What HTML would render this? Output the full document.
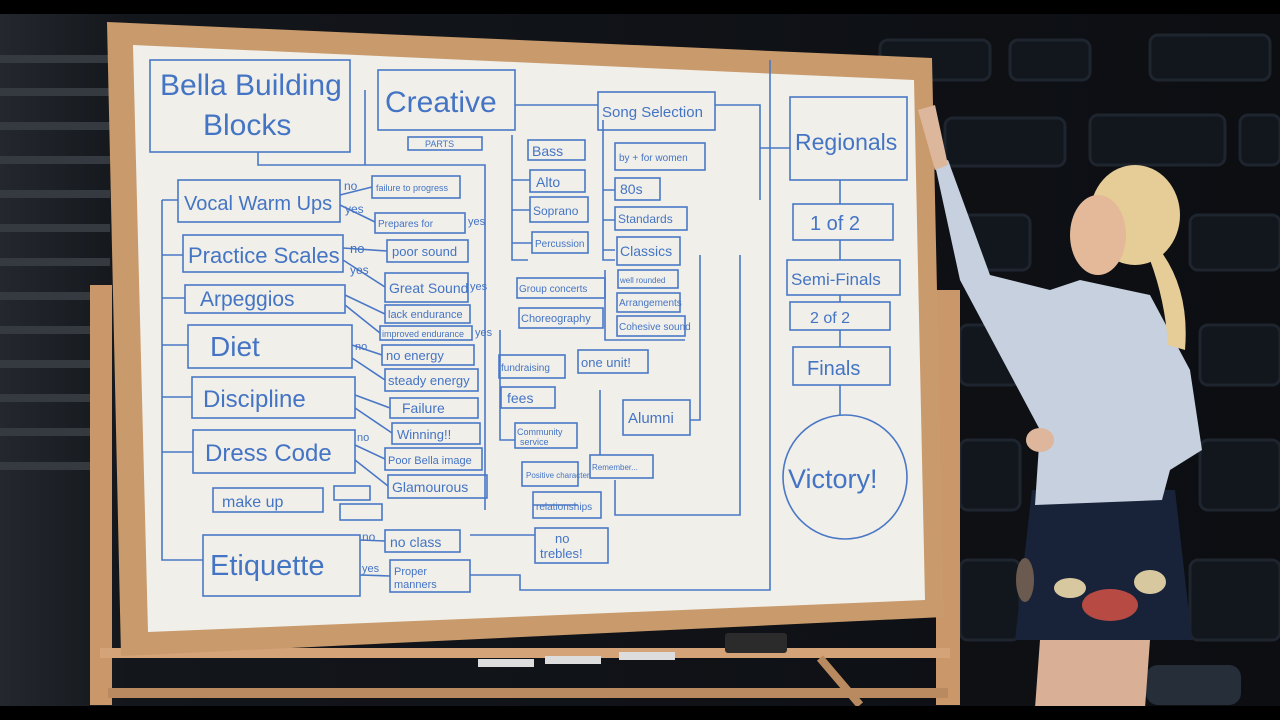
<!DOCTYPE html>
<html><head><meta charset="utf-8"><style>
html,body{margin:0;padding:0;background:#000;}
svg{display:block}
text{font-family:"Liberation Sans",sans-serif;fill:#4474c4}
</style></head><body>
<svg width="1280" height="720" viewBox="0 0 1280 720" xmlns="http://www.w3.org/2000/svg">
<defs>
<linearGradient id="bg" x1="0" x2="1" y1="0" y2="0"><stop offset="0" stop-color="#24282e"/><stop offset="0.1" stop-color="#13161b"/><stop offset="1" stop-color="#0c0e12"/></linearGradient>
</defs>
<rect width="1280" height="720" fill="url(#bg)"/>
<g fill="#353a41">
<rect x="0" y="55" width="110" height="8"/><rect x="0" y="88" width="110" height="8"/><rect x="0" y="122" width="110" height="8"/><rect x="0" y="156" width="110" height="8"/><rect x="0" y="190" width="110" height="8"/><rect x="0" y="224" width="110" height="8"/><rect x="0" y="258" width="110" height="8"/><rect x="0" y="292" width="100" height="8"/><rect x="0" y="326" width="100" height="8"/><rect x="0" y="360" width="100" height="8"/><rect x="0" y="394" width="100" height="8"/><rect x="0" y="428" width="100" height="8"/><rect x="0" y="462" width="100" height="8"/>
</g>
<g fill="#12161d" stroke="#1e252f" stroke-width="3">
<rect x="1010" y="40" width="80" height="40" rx="8"/><rect x="1150" y="35" width="120" height="45" rx="8"/><rect x="880" y="40" width="110" height="40" rx="8"/>
<rect x="945" y="118" width="120" height="48" rx="8"/><rect x="1090" y="115" width="135" height="50" rx="8"/><rect x="1240" y="115" width="40" height="50" rx="8"/>
<rect x="960" y="215" width="70" height="55" rx="8"/><rect x="1190" y="215" width="90" height="55" rx="8"/>
<rect x="960" y="325" width="60" height="60" rx="8"/><rect x="1200" y="325" width="80" height="60" rx="8"/>
<rect x="960" y="440" width="60" height="70" rx="8"/><rect x="1200" y="440" width="80" height="70" rx="8"/>
<rect x="960" y="560" width="60" height="80" rx="8"/><rect x="1190" y="560" width="90" height="80" rx="8"/>
</g>
<rect x="90" y="285" width="22" height="420" fill="#c9976a"/>
<rect x="936" y="290" width="24" height="415" fill="#c9976a"/>
<rect x="100" y="648" width="850" height="10" fill="#d4a478"/>
<rect x="108" y="688" width="840" height="10" fill="#b98a5f"/>
<line x1="820" y1="658" x2="860" y2="705" stroke="#b98a5f" stroke-width="8"/>
<polygon points="107,22 932,58 944,617 121,656" fill="#c99a6b"/>
<polygon points="133,45 914,80 925,600 148,632" fill="#f1efea"/>
<rect x="478" y="659" width="56" height="8" fill="#ddd"/><rect x="545" y="656" width="56" height="8" fill="#ddd"/><rect x="619" y="652" width="56" height="8" fill="#ddd"/>
<rect x="725" y="633" width="62" height="20" rx="3" fill="#2b2b2b"/>
<g fill="none" stroke="#4a78c6" stroke-width="1.6">
<rect x="150" y="60" width="200" height="92"/>
<rect x="378" y="70" width="137" height="60"/>
<rect x="408" y="137" width="74" height="13"/>
<rect x="598" y="92" width="117" height="38"/>
<rect x="790" y="97" width="117" height="83"/>
<rect x="178" y="180" width="162" height="42"/>
<rect x="183" y="235" width="160" height="37"/>
<rect x="185" y="285" width="160" height="28"/>
<rect x="188" y="325" width="164" height="43"/>
<rect x="192" y="377" width="163" height="41"/>
<rect x="193" y="430" width="162" height="43"/>
<rect x="213" y="488" width="110" height="24"/>
<rect x="203" y="535" width="157" height="61"/>
<rect x="372" y="176" width="88" height="22"/><rect x="375" y="213" width="90" height="20"/><rect x="387" y="240" width="81" height="22"/><rect x="385" y="273" width="83" height="29"/><rect x="385" y="305" width="85" height="18"/><rect x="380" y="326" width="92" height="14"/><rect x="382" y="345" width="92" height="20"/><rect x="385" y="369" width="93" height="22"/><rect x="390" y="398" width="88" height="20"/><rect x="392" y="423" width="88" height="21"/><rect x="385" y="448" width="97" height="22"/><rect x="388" y="475" width="99" height="23"/><rect x="385" y="530" width="75" height="22"/><rect x="390" y="560" width="80" height="32"/>
<rect x="334" y="486" width="36" height="14"/><rect x="340" y="504" width="42" height="16"/>
<rect x="528" y="140" width="57" height="20"/><rect x="530" y="170" width="55" height="22"/><rect x="530" y="197" width="58" height="25"/><rect x="532" y="232" width="56" height="21"/><rect x="517" y="278" width="88" height="20"/><rect x="519" y="308" width="84" height="20"/><rect x="499" y="355" width="66" height="23"/><rect x="501" y="387" width="54" height="21"/><rect x="578" y="350" width="70" height="23"/><rect x="623" y="400" width="67" height="35"/><rect x="515" y="423" width="62" height="25"/><rect x="522" y="462" width="56" height="24"/><rect x="533" y="492" width="68" height="26"/><rect x="535" y="528" width="73" height="35"/><rect x="590" y="455" width="63" height="23"/>
<rect x="615" y="143" width="90" height="27"/><rect x="615" y="178" width="45" height="22"/><rect x="615" y="207" width="72" height="23"/><rect x="617" y="237" width="63" height="28"/><rect x="618" y="270" width="60" height="18"/><rect x="617" y="293" width="63" height="19"/><rect x="617" y="316" width="68" height="20"/>
<rect x="793" y="204" width="100" height="36"/><rect x="787" y="260" width="113" height="35"/><rect x="790" y="302" width="100" height="28"/><rect x="793" y="347" width="97" height="38"/>
<circle cx="845" cy="477" r="62"/>
<path d="M258 152V165H485V510M162 200V560H203M162 255H183M162 298H185M162 345H188M162 397H192M162 452H193M162 200H178M515 105H598M365 90V165M715 105H760V200M760 148H790M840 180V204M840 240V260M840 295V302M840 330V347M840 385V415M512 135V260H528M512 180H530M512 210H530M512 243H532M603 120V260H615M603 190H615M603 220H615M603 250H615M605 270V340H685M700 255V420H690M740 255V515H615V480M500 330V440H515M470 535H535M470 575H520V590H770V60M578 505H533M600 390V455"/>
<path d="M340 195L372 187M340 205L375 222M343 248L387 251M343 260L385 287M345 295L385 314M345 305L380 333M352 345L382 355M352 358L385 380M355 395L390 408M355 408L392 433M355 445L385 459M355 460L388 486M360 540L385 541M360 575L390 576"/>
</g>
<g>
<text x="160" y="95" font-size="30">Bella Building</text>
<text x="203" y="135" font-size="30">Blocks</text>
<text x="385" y="112" font-size="30">Creative</text>
<text x="425" y="147" font-size="9">PARTS</text>
<text x="602" y="117" font-size="15">Song Selection</text>
<text x="795" y="150" font-size="23">Regionals</text>
<text x="184" y="210" font-size="20">Vocal Warm Ups</text>
<text x="188" y="263" font-size="22">Practice Scales</text>
<text x="200" y="306" font-size="21">Arpeggios</text>
<text x="210" y="356" font-size="28">Diet</text>
<text x="203" y="407" font-size="24">Discipline</text>
<text x="205" y="461" font-size="24">Dress Code</text>
<text x="222" y="507" font-size="16">make up</text>
<text x="210" y="575" font-size="29">Etiquette</text>
<text x="376" y="191" font-size="9">failure to progress</text>
<text x="378" y="227" font-size="10">Prepares for</text>
<text x="392" y="256" font-size="13">poor sound</text>
<text x="389" y="293" font-size="14">Great Sound</text>
<text x="388" y="318" font-size="11">lack endurance</text>
<text x="382" y="337" font-size="9">improved endurance</text>
<text x="386" y="360" font-size="13">no energy</text>
<text x="388" y="385" font-size="13">steady energy</text>
<text x="402" y="413" font-size="14">Failure</text>
<text x="397" y="439" font-size="13">Winning!!</text>
<text x="388" y="464" font-size="11">Poor Bella image</text>
<text x="392" y="492" font-size="14">Glamourous</text>
<text x="390" y="547" font-size="14">no class</text>
<text x="394" y="575" font-size="11">Proper</text><text x="394" y="588" font-size="11">manners</text>
<text x="344" y="190" font-size="12">no</text><text x="345" y="213" font-size="12">yes</text><text x="350" y="253" font-size="13">no</text><text x="350" y="274" font-size="12">yes</text><text x="470" y="290" font-size="11">yes</text><text x="468" y="225" font-size="11">yes</text><text x="475" y="336" font-size="11">yes</text><text x="355" y="350" font-size="11">no</text><text x="357" y="441" font-size="11">no</text><text x="362" y="541" font-size="12">no</text><text x="362" y="572" font-size="11">yes</text>
<text x="532" y="156" font-size="14">Bass</text><text x="536" y="187" font-size="14">Alto</text><text x="533" y="215" font-size="12">Soprano</text><text x="535" y="247" font-size="10">Percussion</text>
<text x="519" y="292" font-size="10">Group concerts</text><text x="521" y="322" font-size="11">Choreography</text>
<text x="501" y="371" font-size="10">fundraising</text><text x="507" y="403" font-size="14">fees</text>
<text x="581" y="367" font-size="13">one unit!</text><text x="628" y="423" font-size="15">Alumni</text>
<text x="517" y="435" font-size="9">Community</text><text x="520" y="445" font-size="9">service</text>
<text x="526" y="478" font-size="8">Positive character</text>
<text x="536" y="510" font-size="10">relationships</text>
<text x="555" y="543" font-size="13">no</text><text x="540" y="558" font-size="13">trebles!</text>
<text x="592" y="470" font-size="8">Remember...</text>
<text x="619" y="161" font-size="10">by + for women</text><text x="620" y="194" font-size="14">80s</text><text x="618" y="223" font-size="12">Standards</text><text x="620" y="256" font-size="14">Classics</text><text x="620" y="283" font-size="8">well rounded</text><text x="619" y="306" font-size="10">Arrangements</text><text x="619" y="330" font-size="10">Cohesive sound</text>
<text x="810" y="230" font-size="20">1 of 2</text><text x="791" y="285" font-size="17">Semi-Finals</text><text x="810" y="323" font-size="16">2 of 2</text><text x="807" y="375" font-size="20">Finals</text>
<text x="788" y="488" font-size="27">Victory!</text>
</g>
<rect x="1146" y="665" width="95" height="40" rx="12" fill="#262e3a"/>
<path d="M1040 640H1150L1145 708H1035Z" fill="#d9b096"/>
<path d="M1032 490H1175L1192 640H1015Z" fill="#18233a"/>
<ellipse cx="1110" cy="605" rx="28" ry="16" fill="#b84a44"/>
<ellipse cx="1070" cy="588" rx="16" ry="10" fill="#d8c8a0"/>
<ellipse cx="1150" cy="582" rx="16" ry="12" fill="#d8c8a0"/>
<ellipse cx="1025" cy="580" rx="9" ry="22" fill="#6a5a50"/>
<path d="M935 165L948 160L990 275L1050 290L1080 280L1150 295L1190 370L1202 450L1170 470L1162 500L1035 505L1040 430L960 280Z" fill="#c6d0de"/>
<path d="M918 110L935 105L948 165L935 170Z" fill="#dcb79c"/>
<ellipse cx="1040" cy="440" rx="14" ry="12" fill="#ddb69b"/>
<ellipse cx="1135" cy="215" rx="45" ry="50" fill="#e6cc96"/>
<ellipse cx="1098" cy="235" rx="28" ry="40" fill="#e3b99a"/>
<path d="M1160 250Q1190 290 1185 350L1168 345Q1165 300 1150 260Z" fill="#e6cc96"/>
<rect x="0" y="0" width="1280" height="14" fill="#000"/>
<rect x="0" y="706" width="1280" height="14" fill="#000"/>
</svg>
</body></html>
